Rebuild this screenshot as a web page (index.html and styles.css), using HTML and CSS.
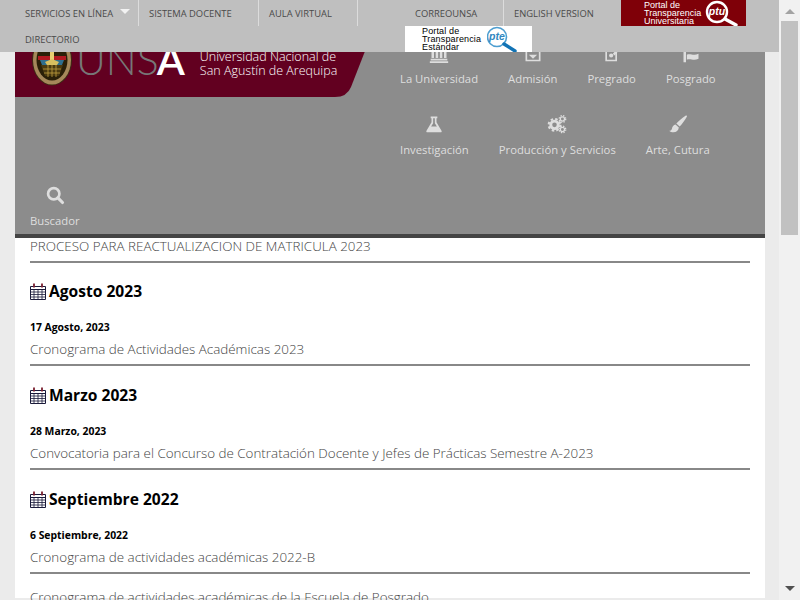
FILE: index.html
```html
<!DOCTYPE html>
<html lang="es">
<head>
    <meta charset="UTF-8">
    <meta name="viewport" content="width=device-width, initial-scale=1.0">
    <title>UNSA - Universidad Nacional de San Agustín de Arequipa</title>
    <link rel="stylesheet" href="styles.css">
</head>
<body>
<div class="page">
    <!-- barra superior, va encima de la cabecera -->
    <div class="topbar">
        <div class="toprow">
            <a class="toplink toplink-services">SERVICIOS EN LÍNEA <span class="caret"></span></a>
            <a class="toplink toplink-teachers">SISTEMA DOCENTE</a>
            <a class="toplink toplink-virtual">AULA VIRTUAL</a>
            <a class="toplink toplink-mail">CORREOUNSA</a>
            <a class="toplink toplink-english">ENGLISH VERSION</a>
            <a class="portal portal-ptu">
                <span class="portal-text">Portal de<br>Transparencia<br>Universitaria</span>
                <svg class="portal-lens" width="34" height="26" viewBox="0 0 34 26">
                    <circle cx="12" cy="12" r="10" fill="none" stroke="#fff" stroke-width="2.4"/>
                    <path d="M20 19l11 6" stroke="#fff" stroke-width="3.4" stroke-linecap="round"/>
                    <text x="12" y="15" text-anchor="middle" class="lens-text lens-text-ptu">ptu</text>
                </svg>
            </a>
        </div>
        <div class="toprow">
            <a class="toplink toplink-directory">DIRECTORIO</a>
            <a class="portal portal-pte">
                <span class="portal-text">Portal de<br>Transparencia<br>Estándar</span>
                <svg class="portal-lens" width="32" height="26" viewBox="0 0 32 26">
                    <circle cx="10" cy="11" r="9.500" fill="none" stroke="#4d9ed0" stroke-width="1.600"/>
                    <path d="M17 18l11 7" stroke="#1173b5" stroke-width="3.400" stroke-linecap="round"/>
                    <text x="10" y="14" text-anchor="middle" class="lens-text lens-text-pte">pte</text>
                </svg>
            </a>
        </div>
    </div>

    <div class="site">
        <header class="site-header">
            <div class="brand">
                <svg class="seal" width="42" height="52" viewBox="0 0 42 52">
                    <ellipse cx="21" cy="26" rx="20" ry="25.5" fill="#3c2c14"/>
                    <ellipse cx="21" cy="26" rx="19" ry="24.5" fill="#a5885a"/>
                    <ellipse cx="21" cy="26" rx="15.5" ry="20.5" fill="#2a2008"/>
                    <path d="M7 22h28v4H7z" fill="#b01820"/>
                    <path d="M9 26h24l-2 5H11z" fill="#2f6f8f"/>
                    <path d="M10 31h22l-4 11H14z" fill="#4a3a10"/>
                    <path d="M19 14h4v17h-4z" fill="#e8cf70"/>
                    <path d="M14 28l7-3 7 3-2 3H16z" fill="#d9c060"/>
                    <path d="M12 35h18M13 39h16M17 31v12M21 31v12M25 31v12" stroke="#c0a040" stroke-width=".8"/>
                </svg>
                <div class="wordmark"><span class="wordmark-uns">UNS</span><span class="wordmark-a">A</span></div>
                <div class="brand-name">Universidad Nacional de<br>San Agustín de Arequipa</div>
            </div>
            <nav>
                <a class="nav-item">
                    <svg class="nav-icon" viewBox="0 0 24 24"><path d="M12 0L1 5v2h22V5zM3 8h3v10H3zM8 8h3v10H8zM13 8h3v10h-3zM18 8h3v10h-3zM2 19h20v2H2zM1 22h22v2H1z"/></svg>
                    <span>La Universidad</span>
                </a>
                <a class="nav-item">
                    <svg class="nav-icon" viewBox="0 0 24 24"><path d="M4 3h16v18H4z" fill="none" stroke="currentColor" stroke-width="2"/><path d="M7 14h10l-5 5z"/></svg>
                    <span>Admisión</span>
                </a>
                <a class="nav-item">
                    <svg class="nav-icon" viewBox="0 0 24 24"><path d="M5 8h12v13H5z" fill="none" stroke="currentColor" stroke-width="2"/><circle cx="11" cy="15" r="2.5"/><path d="M13 13l7-8 2 2-7 8z"/></svg>
                    <span>Pregrado</span>
                </a>
                <a class="nav-item">
                    <svg class="nav-icon" viewBox="0 0 24 24"><path d="M3 8h3v15H3zM7 14c4-2 8 2 14-1v6c-6 3-10-1-14 1z"/></svg>
                    <span>Posgrado</span>
                </a>
                <a class="nav-item">
                    <svg class="nav-icon" viewBox="0 0 24 24"><path d="M8 3h8v2h-1v5l6 10c.6 1.2 0 2-1.200 2H4.200C3 22 2.400 21.200 3 20l6-10V5H8zM11 5v6l-2.500 4h7L13 11V5z" fill-rule="evenodd"/></svg>
                    <span>Investigación</span>
                </a>
                <a class="nav-item">
                    <svg class="nav-icon" viewBox="0 0 24 24">
                        <circle cx="9" cy="13" r="4.500" fill="none" stroke="currentColor" stroke-width="3.500"/>
                        <circle cx="9" cy="13" r="7" fill="none" stroke="currentColor" stroke-width="2.500" stroke-dasharray="3 2.500"/>
                        <circle cx="18.500" cy="6" r="2.500" fill="none" stroke="currentColor" stroke-width="1.500"/>
                        <circle cx="18.500" cy="6" r="4" fill="none" stroke="currentColor" stroke-width="1.500" stroke-dasharray="1.600 1.600"/>
                        <circle cx="18.500" cy="18.500" r="2.500" fill="none" stroke="currentColor" stroke-width="1.500"/>
                        <circle cx="18.500" cy="18.500" r="4" fill="none" stroke="currentColor" stroke-width="1.500" stroke-dasharray="1.600 1.600"/>
                    </svg>
                    <span>Producción y Servicios</span>
                </a>
                <a class="nav-item">
                    <svg class="nav-icon" viewBox="0 0 24 24"><path d="M21 2c1.200-.8 2.200.2 1.600 1.400C20 8 17 12 14 15l-4-3.500C13 8 17 4.500 21 2zM9 12.500l4 3.600c-.4 3.400-3 5.900-6.500 5.900-2 0-3.800-.6-5-1.800 1.800-.3 2.900-1 3.200-2.600.4-2.600 1.900-4.600 4.300-5.100z"/></svg>
                    <span>Arte, Cutura</span>
                </a>
                <a class="nav-item">
                    <svg class="nav-icon" viewBox="0 0 24 24"><circle cx="10.500" cy="10.500" r="6.800" fill="none" stroke="currentColor" stroke-width="3.200"/><path d="M15.500 15.500l5.500 5.500" stroke="currentColor" stroke-width="3.800" stroke-linecap="round"/></svg>
                    <span>Buscador</span>
                </a>
            </nav>
        </header>

        <main class="content">
            <p class="entry">PROCESO PARA REACTUALIZACION DE MATRICULA 2023</p>

            <section class="month">
                <h2 class="month-title">
                    <svg class="calendar" width="16" height="17" viewBox="0 0 16 17"><path d="M.5 3.500h15v13H.5z" fill="#fff" stroke="#1a1a3a"/><path d="M1 6.500h14" stroke="#1a1a3a"/><path d="M1 9h14M1 11.500h14M1 14h14M4 6v10M8 6v10M12 6v10" stroke="#1a1a3a" stroke-width=".8"/><path d="M4 .5v4M12 .5v4" stroke="#7a2030" stroke-width="1.800"/></svg>
                    Agosto 2023
                </h2>
                <div class="entry-date">17 Agosto, 2023</div>
                <p class="entry">Cronograma de Actividades Académicas 2023</p>
            </section>

            <section class="month">
                <h2 class="month-title">
                    <svg class="calendar" width="16" height="17" viewBox="0 0 16 17"><path d="M.5 3.500h15v13H.5z" fill="#fff" stroke="#1a1a3a"/><path d="M1 6.500h14" stroke="#1a1a3a"/><path d="M1 9h14M1 11.500h14M1 14h14M4 6v10M8 6v10M12 6v10" stroke="#1a1a3a" stroke-width=".8"/><path d="M4 .5v4M12 .5v4" stroke="#7a2030" stroke-width="1.800"/></svg>
                    Marzo 2023
                </h2>
                <div class="entry-date">28 Marzo, 2023</div>
                <p class="entry">Convocatoria para el Concurso de Contratación Docente y Jefes de Prácticas Semestre A-2023</p>
            </section>

            <section class="month">
                <h2 class="month-title">
                    <svg class="calendar" width="16" height="17" viewBox="0 0 16 17"><path d="M.5 3.500h15v13H.5z" fill="#fff" stroke="#1a1a3a"/><path d="M1 6.500h14" stroke="#1a1a3a"/><path d="M1 9h14M1 11.500h14M1 14h14M4 6v10M8 6v10M12 6v10" stroke="#1a1a3a" stroke-width=".8"/><path d="M4 .5v4M12 .5v4" stroke="#7a2030" stroke-width="1.800"/></svg>
                    Septiembre 2022
                </h2>
                <div class="entry-date">6 Septiembre, 2022</div>
                <p class="entry">Cronograma de actividades académicas 2022-B</p>
                <p class="entry entry-next">Cronograma de actividades académicas de la Escuela de Posgrado</p>
            </section>
        </main>
    </div>

    <div class="scrollbar">
        <span class="arrow-up"></span>
        <div class="thumb"></div>
        <span class="arrow-down"></span>
    </div>
</div>
</body>
</html>
```

FILE: styles.css
```css
* {
    box-sizing: border-box;
}
html, body {
    margin: 0;
    height: 100%;
    overflow: hidden;
}
body {
    font-family: 'Open Sans', sans-serif;
    background-color: #ebebeb;
}
.page {
    display: flex;
    position: relative;
    height: 600px;
    overflow: hidden;
}

/* barra superior */
.topbar {
    position: absolute;
    top: 0;
    left: 0;
    z-index: 2;
    width: 779px;
    height: 52px;
    padding-left: 15px;
    background-color: #bfbfbf;
}
.toprow {
    display: flex;
    height: 26px;
}
.toplink {
    display: flex;
    align-items: center;
    height: 26px;
    padding-left: 10px;
    font-size: 9.4px;
    color: #4a4a4a;
    white-space: nowrap;
}
.toplink-services {
    width: 124px;
    border-right: 1px solid #dcdcdc;
}
.toplink-teachers {
    width: 120px;
    border-right: 1px solid #dcdcdc;
}
.toplink-virtual {
    width: 99px;
    border-right: 1px solid #dcdcdc;
}
.toplink-mail {
    width: 99px;
    margin-left: 47px;
    border-right: 1px solid #dcdcdc;
}
.toplink-english {
    width: 117px;
}
.toplink-directory {
    width: 390px;
}
.caret {
    width: 0;
    height: 0;
    margin-left: 7px;
    margin-top: -3px;
    border-left: 5px solid transparent;
    border-right: 5px solid transparent;
    border-top: 5px solid #f2f2f2;
}
.portal {
    display: flex;
    align-items: flex-start;
    height: 26px;
    font-family: 'Liberation Sans', Arial, sans-serif;
    font-size: 9px;
    line-height: 8px;
}
.portal-text {
    padding-top: 1px;
    white-space: nowrap;
}
.portal-ptu {
    width: 125px;
    padding-left: 23px;
    gap: 4px;
    background-color: #7f0008;
    color: #fff;
}
.portal-pte {
    width: 127px;
    padding-left: 17px;
    gap: 6px;
    background-color: #fff;
    color: #000;
    letter-spacing: .15px;
}
.portal-lens {
    flex: none;
}
.lens-text {
    font-family: 'Liberation Sans', Arial, sans-serif;
    font-size: 10.5px;
    font-style: italic;
    font-weight: bold;
}
.lens-text-ptu {
    fill: #fff;
}
.lens-text-pte {
    fill: #2f86c0;
}

/* cabecera */
.site {
    width: 779px;
    padding: 0 14px 0 15px;
}
.site-header {
    position: relative;
    z-index: 1;
    height: 238px;
    padding-top: 22px;
    border-bottom: 4px solid #444;
    background-color: #8c8c8c;
    overflow: hidden;
}
.brand {
    display: flex;
    float: left;
    width: 370px;
    height: 97px;
    margin-top: -22px;
    padding: 34px 0 0 16px;
    background-color: #620020;
    clip-path: path("M0 0H370L336 87Q332 97 320 97H0Z");
}
.seal {
    flex: none;
}
.wordmark {
    margin-left: 3px;
    font-family: 'Lato', sans-serif;
    font-size: 41px;
    font-weight: 300;
    line-height: 52px;
    white-space: nowrap;
}
.wordmark-uns {
    color: #777;
}
.wordmark-a {
    margin-left: -2px;
    color: #fff;
    font-weight: 600;
}
.brand-name {
    margin-left: 15px;
    padding-top: 16px;
    font-size: 12.5px;
    font-weight: 300;
    line-height: 14px;
    color: #fff;
    white-space: nowrap;
}
.nav-item {
    display: block;
    float: left;
    height: 71px;
    padding: 19px 15px 0;
    font-size: 11.3px;
    line-height: 20px;
    text-align: center;
    color: #dedede;
}
.nav-icon {
    display: block;
    width: 20px;
    height: 20px;
    margin: 2px auto 6px;
    fill: currentColor;
}

/* listado */
.content {
    height: 362px;
    margin-top: -2px;
    padding: 0 15px;
    background-color: #fff;
}
.entry {
    margin: 0;
    padding-bottom: 5px;
    border-bottom: 2px solid #888;
    font-size: 13.4px;
    font-weight: 300;
    line-height: 20px;
    color: #444;
}
.entry-next {
    margin-top: 13px;
}
.month {
    margin-top: 17px;
}
.month:first-of-type {
    margin-top: 16px;
}
.month-title {
    display: flex;
    align-items: center;
    gap: 3px;
    margin: 0 0 16px;
    font-size: 15.6px;
    font-weight: 700;
    line-height: 24px;
    color: #000;
}
.calendar {
    flex: none;
}
.entry-date {
    margin-bottom: 4px;
    font-size: 10.4px;
    font-weight: 700;
    line-height: 16px;
    color: #000;
}

/* barra de desplazamiento */
.scrollbar {
    display: flex;
    flex-direction: column;
    align-items: center;
    width: 21px;
    background-color: #f1f1f1;
}
.thumb {
    flex: none;
    width: 17px;
    height: 214px;
    margin-top: 7px;
    background-color: #c1c1c1;
}
.arrow-up {
    margin-top: 9px;
    border-left: 5px solid transparent;
    border-right: 5px solid transparent;
    border-bottom: 5px solid #a3a3a3;
}
.arrow-down {
    margin-top: auto;
    margin-bottom: 9px;
    border-left: 5px solid transparent;
    border-right: 5px solid transparent;
    border-top: 5px solid #505050;
}
```
